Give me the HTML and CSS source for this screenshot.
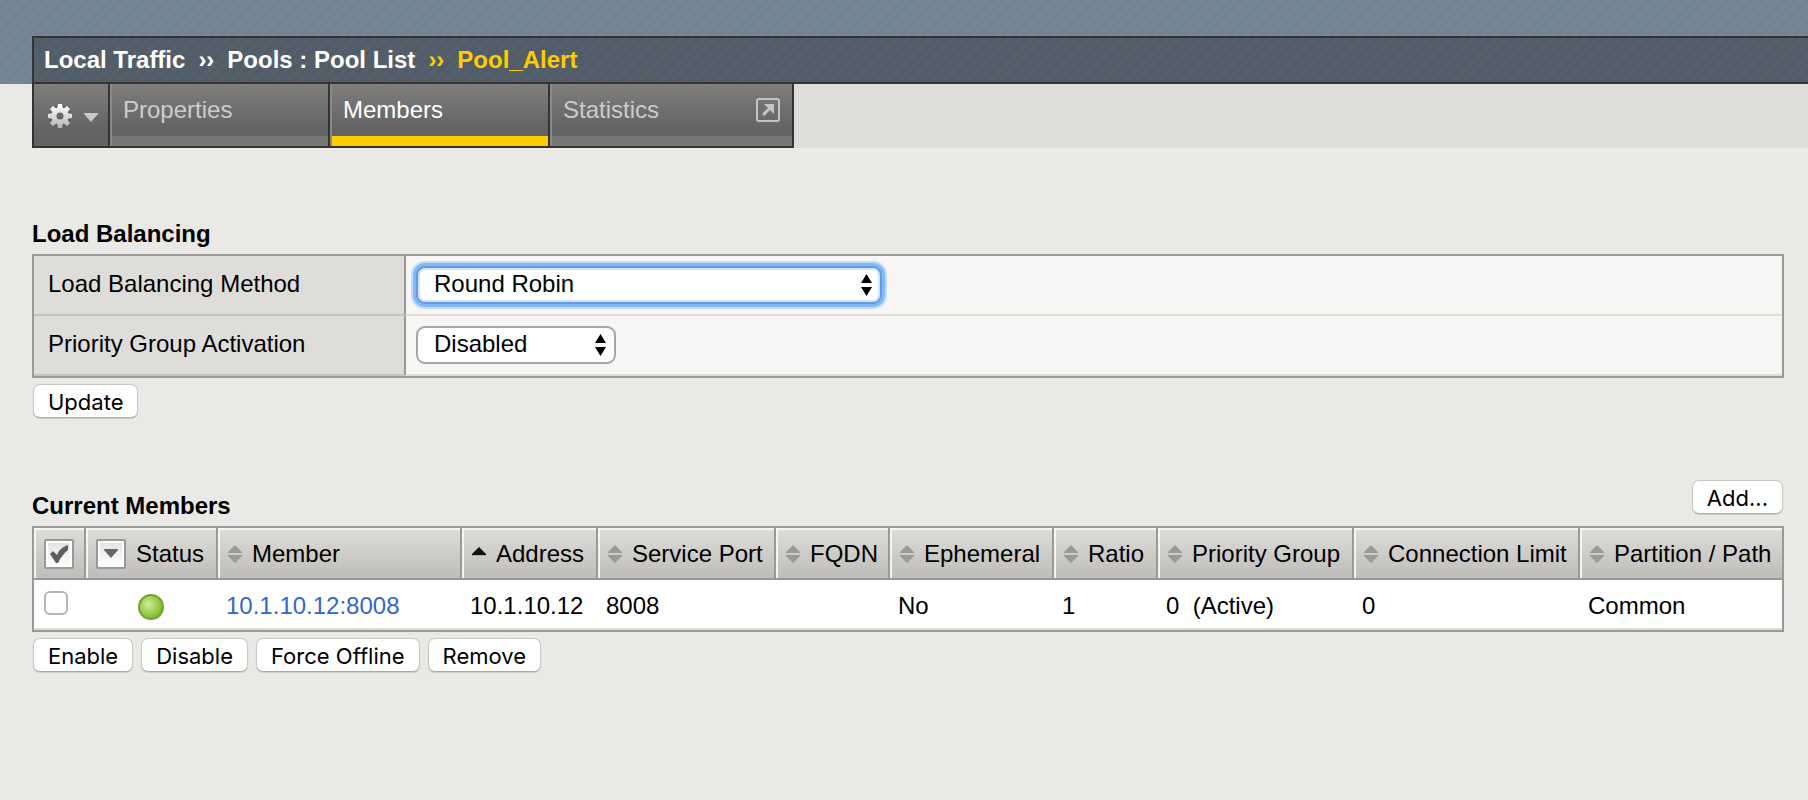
FILE: index.html
```html
<!DOCTYPE html>
<html lang="en">
<head>
<meta charset="utf-8">
<title>Pool_Alert - Members</title>
<link rel="stylesheet" href="styles.css">
</head>
<body>
<svg class="defs" aria-hidden="true">
  <defs>
    <linearGradient id="gearFill" gradientUnits="userSpaceOnUse" x1="0" y1="-12" x2="0" y2="12"><stop offset="0" stop-color="#ffffff"/><stop offset="1" stop-color="#b4b4b4"/></linearGradient>
    <radialGradient id="dotFill" cx="0.4" cy="0.4" r="0.62"><stop offset="0" stop-color="#cdeaa2"/><stop offset="0.6" stop-color="#9ad04c"/><stop offset="1" stop-color="#7db52f"/></radialGradient>
    <symbol id="sort" viewBox="0 0 14 18"><path d="M7 0L14 7V8H0V7ZM0 10H14V11L7 18L0 11Z" fill="#999"/></symbol>
    <symbol id="sort-up" viewBox="0 0 14 18"><path d="M7 2L14 9V10H0V9Z" fill="#111"/><path d="M0 10H14V11H0Z" fill="#aaa"/></symbol>
    <symbol id="updown" viewBox="0 0 11 22"><path d="M5.500 0L11 9H0ZM0 13H11L5.500 22Z" fill="#000"/></symbol>
  </defs>
</svg>
<header class="banner">
  <nav class="crumbs" aria-label="Breadcrumb">
    <a href="#">Local Traffic</a><span>››</span><a href="#">Pools : Pool List</a><span class="current">››</span><span class="current">Pool_Alert</span>
  </nav>
</header>
<nav class="tabbar" aria-label="Pool sections">
  <div class="tabs">
    <button class="tab-menu" type="button" aria-label="Options">
      <svg width="26" height="26" viewBox="-13 -13 26 26">
        <circle r="7" fill="none" stroke="#4f4f4f" stroke-width="8" opacity="0.5"/>
        <circle r="6" fill="none" stroke="url(#gearFill)" stroke-width="5"/>
        <path fill="url(#gearFill)" d="M-2 -12H2L3 -7H-3ZM-2 12H2L3 7H-3ZM-12 -2V2L-7 3V-3ZM12 -2V2L7 3V-3ZM-10 -7L-7 -10L-3 -7L-7 -3ZM10 -7L7 -10L3 -7L7 -3ZM-10 7L-7 10L-3 7L-7 3ZM10 7L7 10L3 7L7 3Z"/>
      </svg>
      <svg width="14" height="12" viewBox="0 0 14 12"><path d="M0 3H14V4L7 12L0 4Z" fill="#c8c8c8"/></svg>
    </button>
    <a class="tab" href="#">Properties</a>
    <a class="tab active" href="#" aria-current="page">Members</a>
    <a class="tab last" href="#">Statistics
      <svg width="24" height="24" viewBox="0 0 24 24" fill="none"><rect x="1" y="1" width="22" height="22" rx="2" stroke="#c4c4c4" stroke-width="2"/><path d="M7 17L14 10" stroke="#c4c4c4" stroke-width="3"/><path d="M8 6H18V16Z" fill="#c4c4c4"/></svg>
    </a>
  </div>
</nav>
<main class="content">
  <h2>Load Balancing</h2>
  <table class="settings">
    <tr>
      <th scope="row"><label for="method">Load Balancing Method</label></th>
      <td><span class="picker wide focused"><select id="method"><option>Round Robin</option></select><svg width="11" height="22"><use href="#updown"/></svg></span></td>
    </tr>
    <tr>
      <th scope="row"><label for="priority">Priority Group Activation</label></th>
      <td><span class="picker"><select id="priority"><option>Disabled</option></select><svg width="11" height="22"><use href="#updown"/></svg></span></td>
    </tr>
  </table>
  <div class="actions"><button class="btn" type="button">Update</button></div>

  <div class="section-head">
    <h2>Current Members</h2>
    <button class="btn" type="button">Add...</button>
  </div>
  <table class="members">
    <colgroup><col class="c-check"><col class="c-status"><col><col class="c-address"><col class="c-port"><col class="c-fqdn"><col class="c-eph"><col class="c-ratio"><col class="c-group"><col class="c-limit"><col class="c-path"></colgroup>
    <thead>
      <tr>
        <th><button class="mini" type="button" aria-label="Select all"><svg width="20" height="20" viewBox="0 0 20 20"><path d="M1 10L4 7L8 11C10 6 13 3 19 1V6C15 9 12 13 9 19H7Z" fill="#5e5e5e"/></svg></button></th>
        <th><div class="head"><button class="mini" type="button" aria-label="Filter status"><svg width="14" height="9" viewBox="0 0 14 9"><path d="M0 0H14V1L7 9L0 1Z" fill="#666"/></svg></button>Status</div></th>
        <th><div class="head"><svg width="14" height="18"><use href="#sort"/></svg>Member</div></th>
        <th aria-sort="ascending"><div class="head"><svg width="14" height="18"><use href="#sort-up"/></svg>Address</div></th>
        <th><div class="head"><svg width="14" height="18"><use href="#sort"/></svg>Service Port</div></th>
        <th><div class="head"><svg width="14" height="18"><use href="#sort"/></svg>FQDN</div></th>
        <th><div class="head"><svg width="14" height="18"><use href="#sort"/></svg>Ephemeral</div></th>
        <th><div class="head"><svg width="14" height="18"><use href="#sort"/></svg>Ratio</div></th>
        <th><div class="head"><svg width="14" height="18"><use href="#sort"/></svg>Priority Group</div></th>
        <th><div class="head"><svg width="14" height="18"><use href="#sort"/></svg>Connection Limit</div></th>
        <th><div class="head"><svg width="14" height="18"><use href="#sort"/></svg>Partition / Path</div></th>
      </tr>
    </thead>
    <tbody>
      <tr>
        <td><input type="checkbox" aria-label="Select 10.1.10.12:8008"></td>
        <td class="status"><svg width="26" height="26" viewBox="0 0 26 26" role="img" aria-label="Available"><circle cx="13" cy="13" r="12" fill="url(#dotFill)" stroke="#6fa52c" stroke-width="2"/></svg></td>
        <td><a href="#">10.1.10.12:8008</a></td>
        <td>10.1.10.12</td>
        <td>8008</td>
        <td></td>
        <td>No</td>
        <td>1</td>
        <td>0&nbsp; (Active)</td>
        <td>0</td>
        <td>Common</td>
      </tr>
    </tbody>
  </table>
  <div class="actions">
    <button class="btn" type="button">Enable</button>
    <button class="btn" type="button">Disable</button>
    <button class="btn" type="button">Force Offline</button>
    <button class="btn" type="button">Remove</button>
  </div>
</main>
</body>
</html>
```
FILE: styles.css
```css
* { box-sizing: border-box; }

body {
  margin: 0;
  background: #eae9e5;
  color: #000;
  font: 24px/28px "Liberation Sans", Arial, sans-serif;
}

.defs { display: block; width: 0; height: 0; }
svg { display: block; flex: none; }
button { font: inherit; cursor: pointer; }
h2 { margin: 0; font-size: 24px; line-height: 28px; }

/* Striped banner with the breadcrumb trail */
.banner {
  padding: 36px 0 0 32px;
  background: repeating-linear-gradient(135deg, #768696 0 4px, #728393 4px 8px);
}

.crumbs {
  display: flex;
  gap: 13px;
  align-items: center;
  height: 48px;
  padding-left: 10px;
  border: 2px solid #333;
  border-right: 0;
  background: repeating-linear-gradient(135deg, #555f69 0 4px, #505c68 4px 8px);
  color: #fff;
  font-weight: bold;
  white-space: nowrap;
}
.crumbs a { color: inherit; text-decoration: none; }
.crumbs .current { color: #fc0; }

/* Tabs */
.tabbar {
  display: flex;
  padding-left: 32px;
  background: linear-gradient(to right, #eae9e5 32px, #deddd9 32px);
}

.tabs {
  display: flex;
  height: 64px;
  border: 2px solid #333;
  border-top: 0;
  background: linear-gradient(#7e7e7e, #636363 46px);
}

.tab-menu {
  display: flex;
  align-items: center;
  gap: 11px;
  width: 74px;
  padding: 2px 0 0 13px;
  border: 0;
  background: none;
}

.tab {
  display: flex;
  justify-content: space-between;
  width: 220px;
  padding: 12px 12px 0 13px;
  border-left: 2px solid #333;
  background: linear-gradient(#777, #777) 0 100% / 100% 10px no-repeat;
  box-shadow: inset 2px 0 #8a8a8a;
  color: #ccc;
  text-decoration: none;
}
.tab.active { background-image: linear-gradient(#fc0, #fc0); color: #fff; }
.tab.last { width: 244px; }
.tab svg { margin-top: 2px; }

/* Page content */
.content { padding: 72px 24px 24px 32px; }

table { width: 100%; border-spacing: 0; border: 2px solid #999; }
th, td { padding: 0; font-weight: normal; text-align: left; }

.settings { margin-top: 6px; }
.settings th,
.settings td { height: 60px; border-bottom: 2px solid #deddd9; }
.settings th {
  width: 370px;
  padding: 0 12px 2px 14px;
  background: #deddd9;
  border-bottom-color: #c4c3c0;
}
.settings td {
  padding-left: 10px;
  background: #f7f6f5;
  border-left: 2px solid #999;
}

.picker { display: flex; position: relative; width: 200px; max-width: 100%; }
.picker.wide { width: 466px; }
.picker select {
  appearance: none;
  width: 100%;
  height: 38px;
  padding: 0 32px 2px 16px;
  border: 2px solid #a5a5a5;
  border-radius: 9px;
  background: #fff;
  color: #000;
  font: inherit;
}
.picker svg { position: absolute; right: 10px; top: 8px; pointer-events: none; }
.picker.focused select {
  border-color: #649bdb;
  outline: 0;
  box-shadow: inset 0 0 0 2px #cfe4fc, 0 0 0 3px #81b9f8, 0 0 0 5px #c2dcf9;
}

.actions { display: flex; gap: 8px; padding: 6px 1px 0; }

.btn {
  height: 34px;
  padding: 2px 14px 0;
  border: 1px solid #c6c6c4;
  border-bottom-color: #acacaa;
  border-radius: 7px;
  background: #fff;
  box-shadow: 0 1px 1px #cfcecb;
  color: #000;
  font: 22px/30px Inter, "Liberation Sans", sans-serif;
  white-space: nowrap;
}

.section-head {
  display: flex;
  justify-content: space-between;
  align-items: flex-end;
  margin-top: 62px;
  padding-right: 1px;
}
.section-head .btn { margin-bottom: 6px; }

/* Members list */
.members { margin-top: 6px; table-layout: fixed; min-width: 1700px; white-space: nowrap; }
.c-check { width: 50px; }
.c-status { width: 132px; }
.c-address { width: 136px; }
.c-port { width: 178px; }
.c-fqdn { width: 114px; }
.c-eph { width: 164px; }
.c-ratio { width: 104px; }
.c-group { width: 196px; }
.c-limit { width: 226px; }
.c-path { width: 204px; }

.members th {
  height: 52px;
  padding: 1px 0 0 10px;
  border-left: 2px solid #999;
  border-bottom: 2px solid #999;
  background: linear-gradient(#deddd9, #bfbdb9);
  box-shadow: inset 2px 2px #f4f4f2;
}
.members th:first-child { border-left: 0; }
.head { display: flex; align-items: center; gap: 10px; }

.mini {
  display: grid;
  place-items: center;
  width: 30px;
  height: 30px;
  padding: 0;
  border: 2px solid #999;
  border-radius: 2px;
  background: linear-gradient(#e2e2e0, #fff);
  box-shadow: inset 0 0 0 2px #fff;
}

.members td {
  height: 50px;
  padding: 4px 0 0 10px;
  border-bottom: 2px solid #deddd9;
  background: #fff;
}
.members a { color: #36c; text-decoration: none; }
.members .status { padding: 6px 0 0 54px; }

.members input {
  appearance: none;
  display: block;
  width: 24px;
  height: 24px;
  margin: 0 0 6px;
  border: 2px solid #b4b4b4;
  border-radius: 6px;
  background: #fff;
}
.members input:checked { background: #81b9f8; }
```
